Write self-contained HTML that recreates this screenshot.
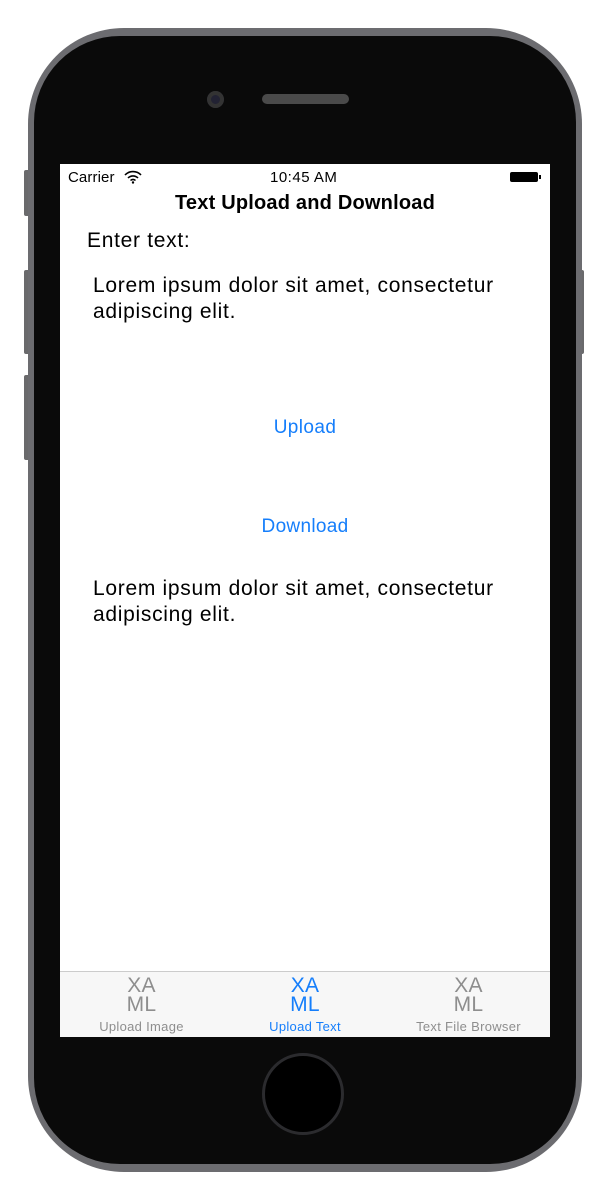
<!DOCTYPE html>
<html><head><style>
body{margin:0;width:604px;height:1200px;background:#fff;position:relative;overflow:hidden;font-family:"Liberation Sans",sans-serif}
.btn{position:absolute;background:#6a6a6c;border-radius:2px}
.phone{position:absolute;left:28px;top:28px;width:554px;height:1144px;border-radius:96px;background:#6c6c70}
.inner{position:absolute;background:#0a0a0a}
.screen{position:absolute;left:60px;top:164px;width:490px;height:872px;background:#fff}
.abs{position:absolute;white-space:nowrap}
.blue{color:#157efb}
.big{font-size:21px;letter-spacing:0.7px;line-height:26px}
.tl{font-size:13px;letter-spacing:0.3px}
.ic{font-size:21px;line-height:19px;letter-spacing:0.3px}
</style></head><body>
<div class="btn" style="left:24px;top:170px;width:6px;height:46px"></div>
<div class="btn" style="left:24px;top:270px;width:6px;height:84px"></div>
<div class="btn" style="left:24px;top:375px;width:6px;height:85px"></div>
<div class="btn" style="left:578px;top:270px;width:6px;height:84px"></div>
<div class="phone"></div>
<div class="inner" style="left:34px;top:36px;width:542px;height:1128px;border-radius:86px"></div>
<div class="abs" style="left:207px;top:91px;width:17px;height:17px;border-radius:50%;background:#223;box-shadow:inset 0 0 0 4px #333"></div>
<div class="abs" style="left:262px;top:94px;width:87px;height:10px;border-radius:5px;background:#4a4a4a"></div>
<div class="abs" style="left:262px;top:1053px;width:82px;height:82px;border-radius:50%;box-sizing:border-box;border:3px solid #2b2b2e;background:#000"></div>
<div class="screen">
 <div class="abs" style="left:8px;top:5px;font-size:15px;letter-spacing:0.1px">Carrier</div>
 <svg class="abs" style="left:64px;top:6px" width="18" height="14" viewBox="0 0 18 14"><path d="M1 5a11 11 0 0 1 16 0M4 8a7 7 0 0 1 10 0M6.5 10.5a3.5 3.5 0 0 1 5 0" stroke="#000" stroke-width="1.6" fill="none"/><circle cx="9" cy="12.5" r="1.2"/></svg>
 <div class="abs" style="left:210px;top:5px;font-size:15px;letter-spacing:0.5px">10:45 AM</div>
 <div class="abs" style="left:450px;top:8px;width:28px;height:10px;background:#000;border-radius:2px"></div>
 <div class="abs" style="left:479px;top:11px;width:2px;height:4px;background:#000"></div>
 <div class="abs" style="left:0;width:490px;text-align:center;top:28px;font-size:20px;font-weight:bold;letter-spacing:0.2px">Text Upload and Download</div>
 <div class="abs big" style="left:27px;top:64px">Enter text:</div>
 <div class="abs big" style="left:33px;top:109px">Lorem ipsum dolor sit amet, consectetur<br>adipiscing elit.</div>
 <div class="abs blue" style="left:0;width:490px;text-align:center;top:253px;font-size:19px;letter-spacing:0.4px">Upload</div>
 <div class="abs blue" style="left:0;width:490px;text-align:center;top:352px;font-size:19px;letter-spacing:0.3px">Download</div>
 <div class="abs big" style="left:33px;top:412px">Lorem ipsum dolor sit amet, consectetur<br>adipiscing elit.</div>
 <div class="abs" style="left:0;top:807px;width:490px;height:65px;background:#f7f7f7;border-top:1px solid #ccc"></div>
 <div class="abs ic" style="left:0;top:812px;width:163px;text-align:center;color:#8e8e8e">XA<br>ML</div>
 <div class="abs tl" style="left:0;top:855px;width:163px;text-align:center;color:#8e8e8e">Upload Image</div>
 <div class="abs blue ic" style="left:163px;top:812px;width:164px;text-align:center">XA<br>ML</div>
 <div class="abs blue tl" style="left:163px;top:855px;width:164px;text-align:center">Upload Text</div>
 <div class="abs ic" style="left:327px;top:812px;width:163px;text-align:center;color:#8e8e8e">XA<br>ML</div>
 <div class="abs tl" style="left:327px;top:855px;width:163px;text-align:center;color:#8e8e8e">Text File Browser</div>
</div>
</body></html>
